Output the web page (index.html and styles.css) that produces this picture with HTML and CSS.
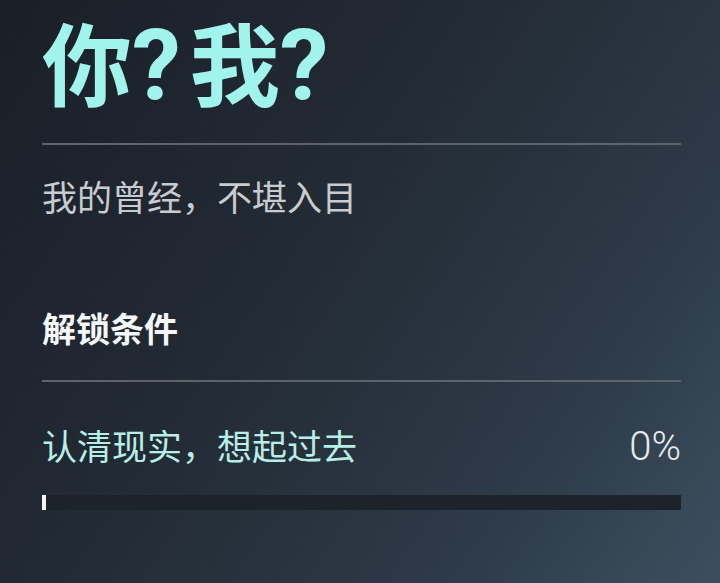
FILE: index.html
```html
<!DOCTYPE html>
<html lang="zh-CN">
<head>
<meta charset="utf-8">
<title>你？我？</title>
<link rel="stylesheet" href="styles.css">
</head>
<body>
<main class="panel">
  <h1 class="title">你<span class="q q-gap">?</span>我<span class="q">?</span></h1>
  <hr class="rule">
  <p class="desc">我的曾经，不堪入目</p>
  <h2 class="section">解锁条件</h2>
  <hr class="rule">
  <div class="cond">
    <span class="cond-text">认清现实，想起过去</span>
    <span class="cond-pct">0%</span>
  </div>
  <div class="bar"><div class="bar-fill" style="width:0.7%"></div></div>
</main>
</body>
</html>
```
FILE: styles.css
```css
html, body {
  margin: 0;
  height: 100%;
}
body {
  background: linear-gradient(125deg, #1a1f27 0%, #222a34 40%, #2d3a47 75%, #3c4f5f 100%);
  font-family: "Noto Sans CJK SC", "Noto Sans", sans-serif;
  overflow: hidden;
}
.panel {
  padding: 0 39px 0 42px;
  display: flex;
  flex-direction: column;
}
.title {
  margin: -5px 0 0;
  font-family: "Noto Sans CJK SC", sans-serif;
  font-size: 90px;
  line-height: normal;
  font-weight: 700;
  color: #a0f4ec;
  white-space: nowrap;
}
.q {
  font-family: "Roboto", sans-serif;
  font-size: 98px;
  line-height: normal;
}
.q-gap {
  margin-right: 9px;
}
.rule {
  margin: 0;
  border: 0;
  height: 2px;
  background: #5c636b;
}
.title + .rule {
  margin-top: 18px;
}
.desc {
  margin: 31px 0 0;
  font-size: 35px;
  line-height: 40px;
  color: #c8ccd0;
}
.section {
  margin: 92px 0 0;
  font-size: 34px;
  line-height: 40px;
  font-weight: 700;
  color: #f4f6f7;
}
.section + .rule {
  margin-top: 32px;
}
.cond {
  margin-top: 43px;
  display: flex;
  justify-content: space-between;
  align-items: baseline;
}
.cond-text {
  font-size: 35px;
  line-height: 40px;
  color: #b7eee6;
}
.cond-pct {
  font-family: "Roboto", "Noto Sans", sans-serif;
  font-size: 40px;
  line-height: 40px;
  font-weight: 300;
  color: #e6eaec;
}
.bar {
  margin-top: 28px;
  height: 15px;
  background: #1d232b;
}
.bar-fill {
  height: 100%;
  min-width: 4px;
  background: #f2f4f5;
}
```
